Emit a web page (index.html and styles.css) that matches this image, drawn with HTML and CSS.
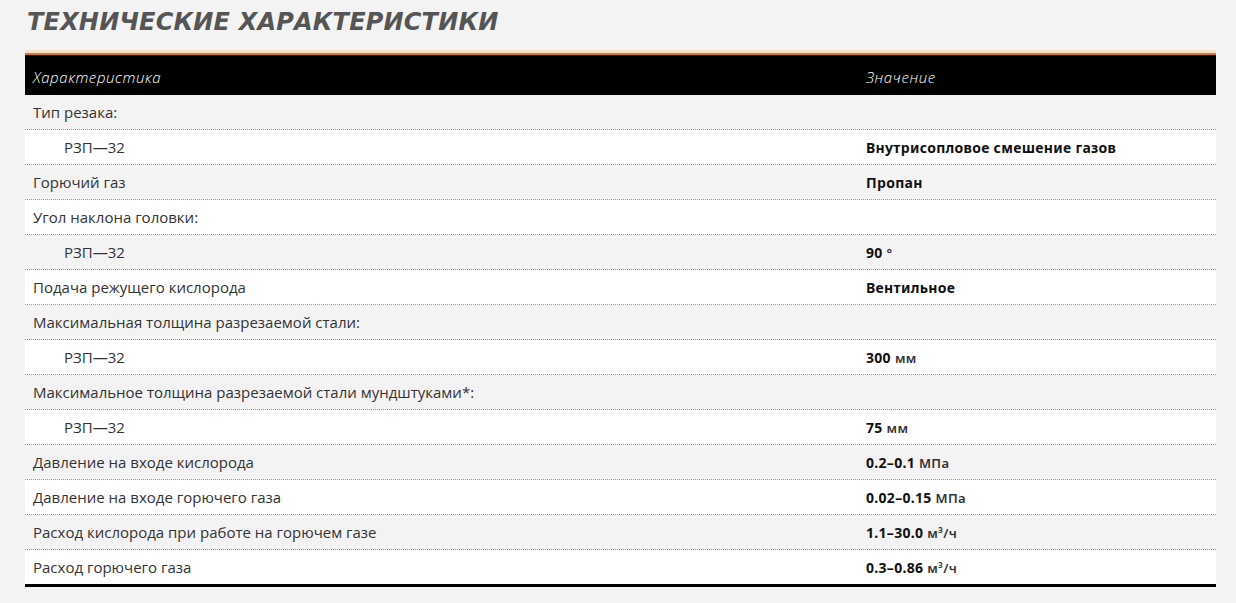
FILE: index.html
```html
<!DOCTYPE html>
<html lang="ru">
<head>
<meta charset="utf-8">
<link rel="stylesheet" href="styles.css">
</head>
<body>
<div class="page">
  <h1 class="title">ТЕХНИЧЕСКИЕ ХАРАКТЕРИСТИКИ</h1>
  <div class="specs">
    <div class="head">
      <div class="cell">Характеристика</div>
      <div class="cell">Значение</div>
    </div>
    <div class="row alt"><div class="cell">Тип резака:</div><div class="cell val"></div></div>
    <div class="row"><div class="cell sub">РЗП—32</div><div class="cell val">Внутрисопловое смешение газов</div></div>
    <div class="row alt"><div class="cell">Горючий газ</div><div class="cell val">Пропан</div></div>
    <div class="row"><div class="cell">Угол наклона головки:</div><div class="cell val"></div></div>
    <div class="row alt"><div class="cell sub">РЗП—32</div><div class="cell val">90 <span class="unit">°</span></div></div>
    <div class="row"><div class="cell">Подача режущего кислорода</div><div class="cell val">Вентильное</div></div>
    <div class="row alt"><div class="cell">Максимальная толщина разрезаемой стали:</div><div class="cell val"></div></div>
    <div class="row"><div class="cell sub">РЗП—32</div><div class="cell val">300 <span class="unit">мм</span></div></div>
    <div class="row alt"><div class="cell">Максимальное толщина разрезаемой стали мундштуками*:</div><div class="cell val"></div></div>
    <div class="row"><div class="cell sub">РЗП—32</div><div class="cell val">75 <span class="unit">мм</span></div></div>
    <div class="row alt"><div class="cell">Давление на входе кислорода</div><div class="cell val">0.2–0.1 <span class="unit">МПа</span></div></div>
    <div class="row"><div class="cell">Давление на входе горючего газа</div><div class="cell val">0.02–0.15 <span class="unit">МПа</span></div></div>
    <div class="row alt"><div class="cell">Расход кислорода при работе на горючем газе</div><div class="cell val">1.1–30.0 <span class="unit">м³/ч</span></div></div>
    <div class="row last"><div class="cell">Расход горючего газа</div><div class="cell val">0.3–0.86 <span class="unit">м³/ч</span></div></div>
  </div>
</div>
</body>
</html>
```
FILE: styles.css
```css
html, body {
  margin: 0;
  padding: 0;
  background: #f3f3f3;
}
.page {
  padding: 0 20px 0 25px;
  font-family: "Open Sans", "Liberation Sans", sans-serif;
  color: #333;
}
.title {
  margin: 0;
  padding: 6px 0 0 2px;
  height: 50px;
  box-sizing: border-box;
  font-family: "DejaVu Sans", sans-serif;
  font-weight: bold;
  font-style: italic;
  font-size: 24px;
  letter-spacing: 0.2px;
  color: #555;
  line-height: 32px;
}
.specs {
  width: 1191px;
}
.head {
  display: grid;
  grid-template-columns: 833px 1fr;
  height: 45px;
  box-sizing: border-box;
  border-top: 3px solid #f7e2c6;
  background: linear-gradient(#c87a3c 0, #c87a3c 2px, #3a1408 2px, #3a1408 3px, #000 3px);
  align-items: center;
  padding-top: 5px;
}
.head .cell {
  color: #fff;
  font-style: italic;
  font-weight: 300;
  font-size: 15px;
  letter-spacing: 0.6px;
}
.row {
  display: grid;
  grid-template-columns: 833px 1fr;
  height: 35px;
  box-sizing: border-box;
  align-items: center;
  background: #fff;
  border-bottom: 1px dotted #999;
}
.row.alt {
  background: #f3f3f3;
}
.row.last {
  border-bottom: 3px solid #000;
  height: 37px;
}
.cell {
  padding-left: 8px;
  font-size: 15px;
  white-space: nowrap;
}
.cell.sub {
  padding-left: 39px;
}
.cell.val {
  font-weight: bold;
  color: #111;
  font-family: "Noto Sans", "Open Sans", sans-serif;
  font-size: 14px;
  letter-spacing: 0.3px;
}
.unit {
  font-weight: 600;
  color: #333;
  font-size: 13px;
}
```
